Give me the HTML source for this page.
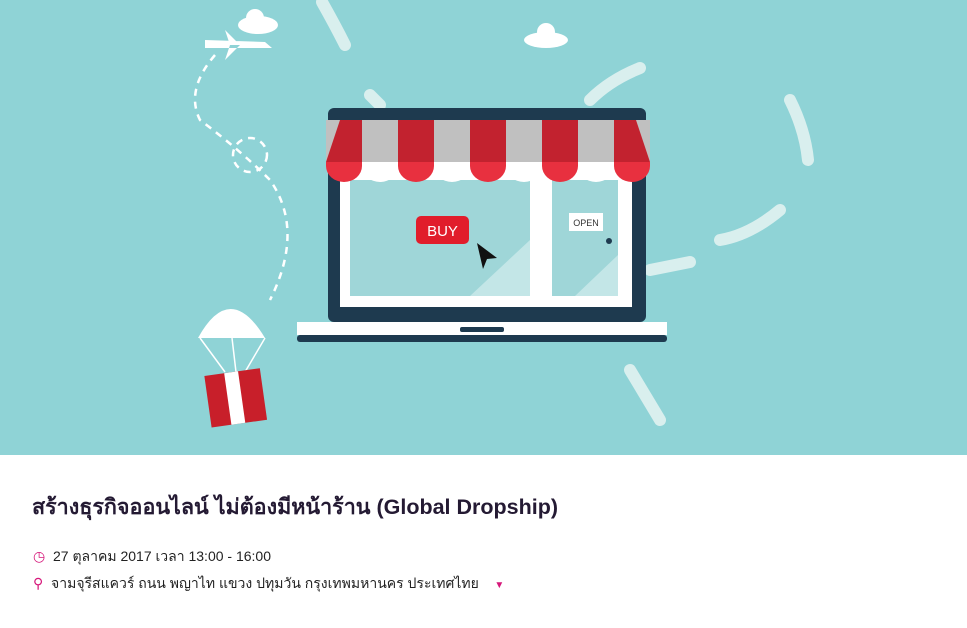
<!DOCTYPE html>
<html><head><meta charset="utf-8"><style>
body{margin:0;width:967px;height:628px;background:#fff;font-family:"Liberation Sans","Noto Sans CJK SC",sans-serif;overflow:hidden;position:relative}
.banner{position:absolute;left:0;top:0;width:967px;height:455px;background:#8fd3d6}
h1{position:absolute;left:32px;top:490px;margin:0;font-size:21.5px;font-weight:bold;color:#241a33;white-space:nowrap}
.l{position:absolute;left:33px;font-size:14px;color:#222;white-space:nowrap}
</style></head><body>
<div class="banner">
<svg width="967" height="455" viewBox="0 0 967 455">
<g fill="none" stroke="#d9efee" stroke-width="12" stroke-linecap="round">
<path d="M322 2 Q335 25 345 45"/>
<path d="M590 100 Q610 80 640 68"/>
<path d="M790 100 Q805 130 808 160"/>
<path d="M780 210 Q750 235 720 240"/>
<path d="M650 270 L690 262"/>
<path d="M630 370 L660 420"/>
<path d="M370 95 L380 105"/>
</g>
<g fill="none" stroke="#fff" stroke-width="2.5" stroke-dasharray="7 6">
<path d="M215 55 Q185 90 200 120 Q240 150 270 180 Q305 230 270 300"/>
<circle cx="250" cy="155" r="17"/>
</g>
<g fill="#fff"><ellipse cx="258" cy="25" rx="20" ry="9"/><circle cx="255" cy="18" r="9"/>
<ellipse cx="546" cy="40" rx="22" ry="8"/><circle cx="546" cy="32" r="9"/>
<path d="M205 40 L265 42 L272 48 L205 48 Z M225 30 L240 45 L230 45 Z M225 60 L240 45 L230 45Z"/></g>
<path d="M198 338 Q230 280 265 338 Z" fill="#fff"/>
<g stroke="#fff" stroke-width="1.5"><path d="M200 338 L225 372 M265 338 L245 372 M232 338 L236 372"/></g>
<g transform="rotate(-8 235 400)"><rect x="208" y="372" width="56" height="52" fill="#c81f2a"/><rect x="228" y="372" width="14" height="52" fill="#fff"/></g>
<rect x="328" y="108" width="318" height="214" rx="6" fill="#1e3a4f"/>
<rect x="340" y="150" width="292" height="157" fill="#fff"/>
<rect x="350" y="180" width="180" height="116" fill="#9fd6d8"/>
<rect x="552" y="180" width="66" height="116" fill="#9fd6d8"/>
<path d="M470 296 L530 240 L530 296Z M575 296 L618 255 L618 296Z" fill="#c3e6e7"/>
<g>
<rect x="326" y="120" width="324" height="42" fill="#c0c0c0"/>
<path d="M326 162 L340 120 L362 120 L362 162Z M398 120 L434 120 L434 162 L398 162Z M470 120 L506 120 L506 162 L470 162Z M542 120 L578 120 L578 162 L542 162Z M614 120 L636 120 L650 162 L614 162Z" fill="#c2222f"/>
</g>
<g>
<path d="M326 162 h36 v4 a18 16 0 0 1 -36 0Z M398 162 h36 v4 a18 16 0 0 1 -36 0Z M470 162 h36 v4 a18 16 0 0 1 -36 0Z M542 162 h36 v4 a18 16 0 0 1 -36 0Z M614 162 h36 v4 a18 16 0 0 1 -36 0Z" fill="#e8303f"/>
<path d="M362 162 h36 v4 a18 16 0 0 1 -36 0Z M434 162 h36 v4 a18 16 0 0 1 -36 0Z M506 162 h36 v4 a18 16 0 0 1 -36 0Z M578 162 h36 v4 a18 16 0 0 1 -36 0Z" fill="#fff"/>
</g>
<rect x="416" y="216" width="53" height="28" rx="5" fill="#e11d2b"/>
<text x="442.5" y="236" text-anchor="middle" font-family="Liberation Sans" font-size="15" fill="#fff">BUY</text>
<path d="M477 243 L497 258 L487 259 L483 269Z" fill="#111"/>
<rect x="569" y="213" width="34" height="18" fill="#fff"/>
<text x="586" y="226" text-anchor="middle" font-family="Liberation Sans" font-size="9" fill="#333">OPEN</text>
<circle cx="609" cy="241" r="3" fill="#1e3a4f"/>
<rect x="297" y="322" width="370" height="13" fill="#fff"/>
<rect x="297" y="335" width="370" height="7" rx="3" fill="#1e3a4f"/>
<rect x="460" y="327" width="44" height="5" rx="2" fill="#1e3a4f"/>
</svg>
</div>
<h1>สร้างธุรกิจออนไลน์ ไม่ต้องมีหน้าร้าน (Global Dropship)</h1>
<div class="l" style="top:546px"><span style="color:#d6177a">◷</span>&nbsp; 27 ตุลาคม 2017 เวลา 13:00 - 16:00</div>
<div class="l" style="top:573px"><span style="color:#d6177a">⚲</span>&nbsp; จามจุรีสแควร์ ถนน พญาไท แขวง ปทุมวัน กรุงเทพมหานคร ประเทศไทย &nbsp;&nbsp;&nbsp;<span style="color:#d6177a;font-size:10px">▼</span></div>
</body></html>
